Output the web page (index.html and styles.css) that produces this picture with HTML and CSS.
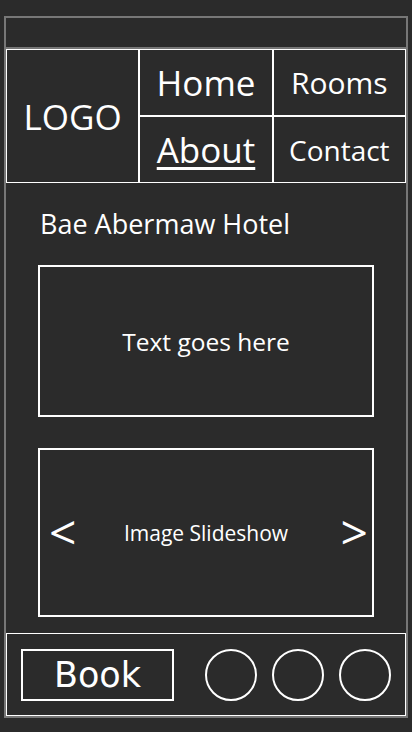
FILE: index.html
```html
<!DOCTYPE html>
<html>
<head>
<meta charset="utf-8">
<link rel="stylesheet" href="styles.css">
</head>
<body>
<div class="frame">
  <div class="topstrip"></div>
  <nav class="nav">
    <div class="cell logo">LOGO</div>
    <div class="cell home">Home</div>
    <div class="cell rooms">Rooms</div>
    <div class="cell about"><a href="#">About</a></div>
    <div class="cell contact">Contact</div>
  </nav>
  <main class="main">
    <h1 class="title">Bae Abermaw Hotel</h1>
    <div class="box textbox">Text goes here</div>
    <div class="box slideshow">
      <span class="arrow prev">&lt;</span>
      <span class="slide-label">Image Slideshow</span>
      <span class="arrow next">&gt;</span>
    </div>
  </main>
  <footer class="footer">
    <button class="book">Book</button>
    <div class="circles">
      <span class="circle"></span>
      <span class="circle"></span>
      <span class="circle"></span>
    </div>
  </footer>
</div>
</body>
</html>
```

FILE: styles.css
```css
html, body {
  margin: 0;
  padding: 0;
  background: #2b2b2b;
}
body {
  font-family: "Open Sans", "Liberation Sans", sans-serif;
  color: #fff;
  width: 412px;
  height: 732px;
  overflow: hidden;
}
.frame {
  box-sizing: border-box;
  margin: 16px 0 0 4px;
  width: 404px;
  height: 702px;
  border: 2px solid #777;
  display: flex;
  flex-direction: column;
}
.topstrip {
  height: 29px;
  border-bottom: 2px solid #777;
  flex: none;
}
.nav {
  flex: none;
  display: grid;
  grid-template-columns: repeat(3, 1fr);
  grid-template-rows: 67px 67px;
}
.cell {
  box-sizing: border-box;
  border: 1px solid #fff;
  display: flex;
  align-items: center;
  justify-content: center;
  line-height: 1;
  white-space: nowrap;
}
.logo {
  grid-row: 1 / span 2;
  font-size: 35px;
}
.home { font-size: 35px; }
.rooms { font-size: 30px; }
.about { font-size: 35px; }
.about a { color: #fff; text-decoration: underline; text-underline-offset: 4px; }
.contact { font-size: 28px; }
.main {
  flex: 1;
  padding: 22px 0 0 32px;
  box-sizing: border-box;
}
.title {
  margin: 0 0 23px 0;
  padding-left: 2px;
  font-weight: 400;
  font-size: 27px;
  line-height: 37px;
}
.box {
  box-sizing: border-box;
  width: 336px;
  border: 2px solid #fff;
}
.textbox {
  height: 152px;
  display: flex;
  align-items: center;
  justify-content: center;
  font-size: 24.5px;
}
.slideshow {
  margin-top: 31px;
  height: 169px;
  display: grid;
  grid-template-columns: 1fr auto 1fr;
  align-items: center;
  padding: 0 6px;
}
.slide-label {
  font-size: 21px;
}
.arrow {
  font-size: 48px;
  line-height: 1;
  padding-bottom: 2px;
}
.prev { justify-self: start; margin-left: 3px; }
.next { justify-self: end; margin-right: -2px; }
.footer {
  flex: none;
  height: 83px;
  box-sizing: border-box;
  border: 1px solid #fff;
  display: flex;
  align-items: center;
  padding: 0 14px 0 14px;
}
.book {
  box-sizing: border-box;
  width: 153px;
  height: 52px;
  background: transparent;
  border: 2px solid #fff;
  color: #fff;
  font-family: "DejaVu Sans", sans-serif;
  font-size: 35px;
  line-height: 1;
  padding: 2px 0 0 0;
  margin: 0;
}
.circles {
  margin-left: auto;
  display: flex;
  gap: 15px;
}
.circle {
  box-sizing: border-box;
  width: 52px;
  height: 52px;
  border: 2px solid #fff;
  border-radius: 50%;
}
```
